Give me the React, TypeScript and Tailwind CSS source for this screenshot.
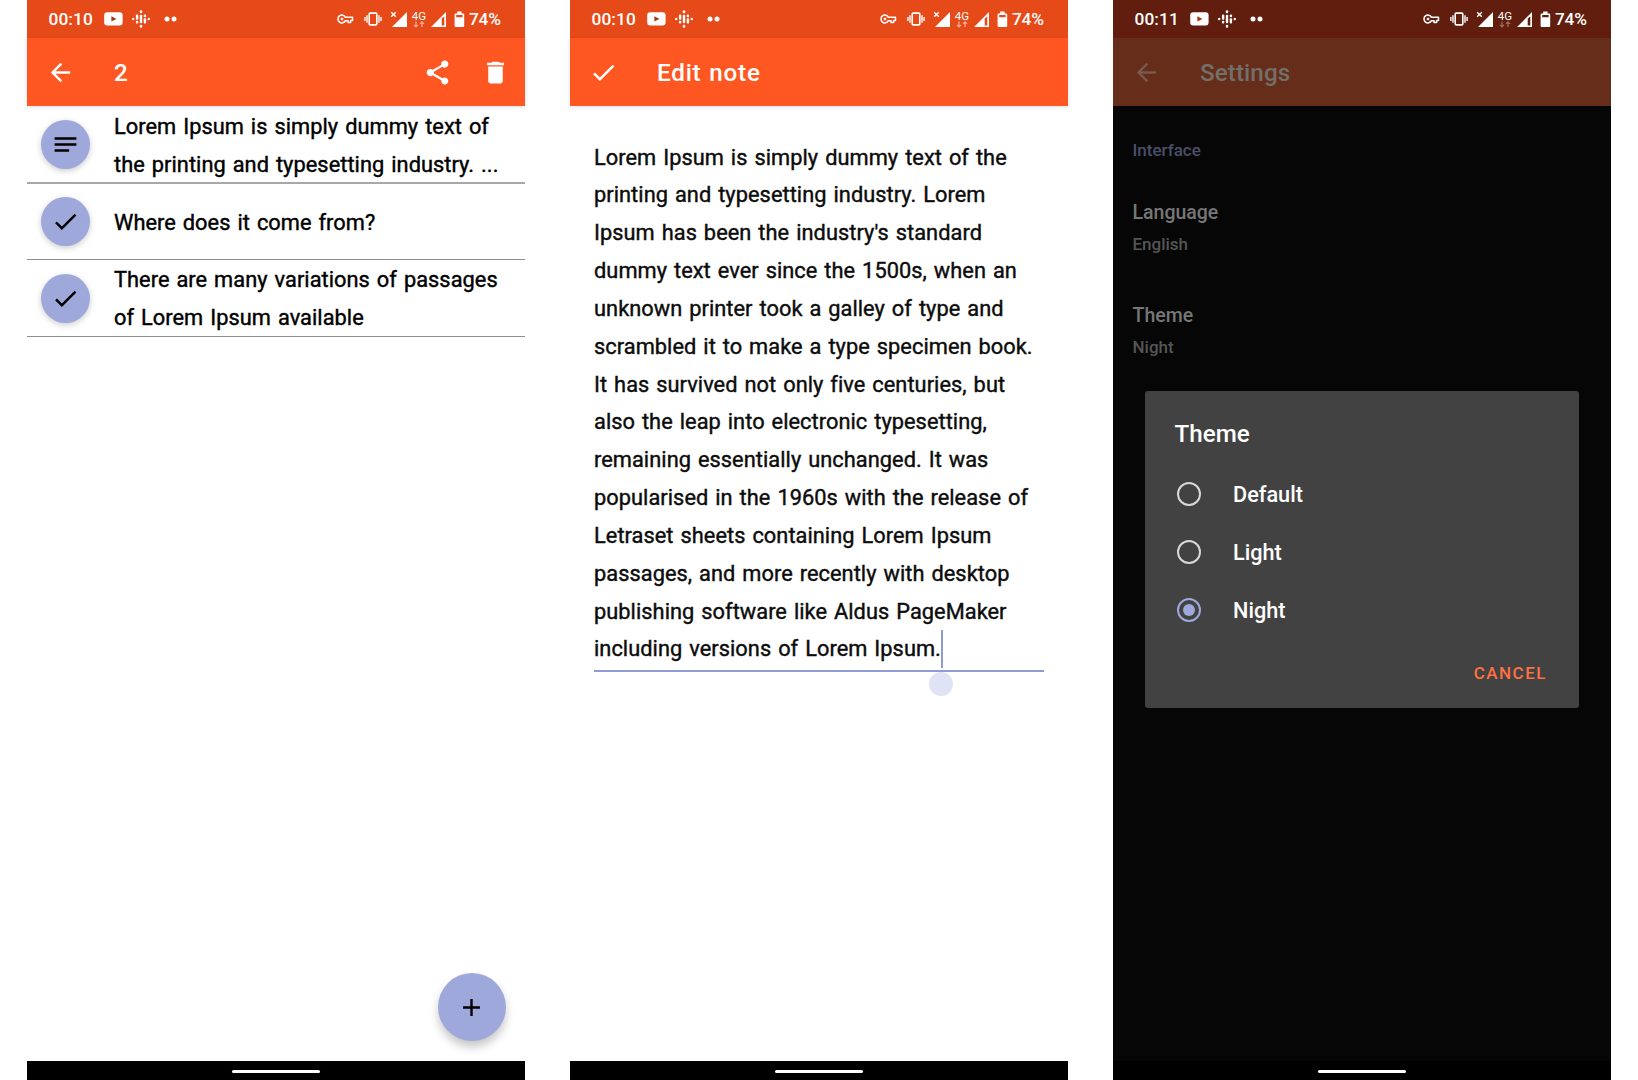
import React from "react";

function Svg({ d, size = 29, className = "" }: { d: string; size?: number; className?: string }) {
  return (
    <svg width={size} height={size} viewBox="0 0 24 24" fill="currentColor" className={"shrink-0 " + className}>
      <path d={d} />
    </svg>
  );
}

const ARROW = "M20 11H7.83l5.59-5.59L12 4l-8 8 8 8 1.41-1.41L7.83 13H20v-2z";
const CHECK = "M9 16.17L4.83 12l-1.42 1.41L9 19 21 7l-1.41-1.41z";
const SHARE =
  "M18 16.08c-.76 0-1.44.3-1.96.77L8.91 12.7c.05-.23.09-.46.09-.7s-.04-.47-.09-.7l7.05-4.11c.54.5 1.25.81 2.04.81 1.66 0 3-1.34 3-3s-1.34-3-3-3-3 1.34-3 3c0 .24.04.47.09.7L8.04 9.81C7.5 9.31 6.79 9 6 9c-1.66 0-3 1.34-3 3s1.34 3 3 3c.79 0 1.5-.31 2.04-.81l7.12 4.16c-.05.21-.08.43-.08.65 0 1.61 1.31 2.92 2.92 2.92 1.61 0 2.92-1.31 2.92-2.92s-1.31-2.92-2.92-2.92z";
const TRASH = "M6 19c0 1.1.9 2 2 2h8c1.1 0 2-.9 2-2V7H6v12zM19 4h-3.5l-1-1h-5l-1 1H5v2h14V4z";
const PLUS = "M19 13h-6v6h-2v-6H5v-2h6V5h2v6h6v2z";
const NOTES = "M3 18h12v-2H3v2zM3 6v2h18V6H3zm0 7h18v-2H3v2z";

function StatusBar({ time, className, arrows }: { time: string; className: string; arrows: string }) {
  return (
    <div className={"flex h-[38px] shrink-0 items-center pl-[21.5px] pr-[24px] text-[17.3px] font-medium text-white " + className}>
      <span className="w-[55.5px] pt-[2px] tracking-[0.1px]">{time}</span>
      <svg width="19" height="14" viewBox="0 0 19 14" className="shrink-0">
        <rect x="0.2" y="0.3" width="18.4" height="13.2" rx="3" fill="white" />
        <path d="M7.4 4.3v5.2l5-2.6z" className="fill-[#a8330f]" />
      </svg>
      <svg width="18" height="18" viewBox="0 0 18 18" className="ml-[9px] shrink-0" fill="white">
        <rect x="0" y="7.7" width="2.4" height="2.6" rx="1.2" />
        <rect x="3.9" y="4.6" width="2.4" height="5.2" rx="1" />
        <rect x="3.9" y="10.8" width="2.4" height="2.6" rx="1" />
        <rect x="7.8" y="0.3" width="2.4" height="2.9" rx="1" />
        <rect x="7.8" y="4.8" width="2.4" height="8.4" rx="1" />
        <rect x="7.8" y="14.8" width="2.4" height="2.9" rx="1" />
        <rect x="11.7" y="4.6" width="2.4" height="2.6" rx="1" />
        <rect x="11.7" y="8.2" width="2.4" height="5.2" rx="1" />
        <rect x="15.6" y="7.7" width="2.4" height="2.6" rx="1.2" />
      </svg>
      <svg width="14" height="6" viewBox="0 0 14 6" className="ml-[14px] shrink-0" fill="white">
        <circle cx="3" cy="3" r="2.5" />
        <circle cx="10" cy="3" r="2.5" />
      </svg>
      <div className="flex-1" />
      <svg width="17" height="10" viewBox="0 0 17 10" className="shrink-0" fill="none" stroke="white" strokeWidth="1.5" strokeLinejoin="round">
        <path d="M8.4 3.3A3.9 3.9 0 1 0 8.4 6.7H11V8.6H13.6V6.4H15.5V3.3Z" />
        <circle cx="5" cy="5" r="1" fill="white" strokeWidth="0.8" />
      </svg>
      <svg width="18" height="16" viewBox="0 0 18 16" className="ml-[10px] shrink-0" fill="none" stroke="white" strokeWidth="1.6">
        <rect x="5.2" y="2.1" width="7.6" height="11.8" rx="1" />
        <path d="M3 4.2v7.6M15 4.2v7.6M.9 6v4M17.1 6v4" strokeWidth="1.4" />
      </svg>
      <svg width="18" height="17" viewBox="0 0 18 17" className="ml-[8px] shrink-0" fill="white">
        <path d="M17 1v15H2z" />
        <path d="M1.2 1.2l4.6 4.6M5.8 1.2L1.2 5.8" stroke="white" strokeWidth="1.4" />
      </svg>
      <div className="ml-[4px] flex w-[14px] shrink-0 flex-col items-center">
        <span className="h-[10px] text-[11.5px] leading-[10px] font-normal">4G</span>
        <svg width="12" height="7" viewBox="0 0 12 7" fill="none" strokeWidth="1.2">
          <path d="M3 .5v5M1 3.8l2 2 2-2" className={arrows} />
          <path d="M9 6V1M7 2.9l2-2 2 2" className={arrows} />
        </svg>
      </div>
      <svg width="17" height="17" viewBox="0 0 17 17" className="ml-[4px] shrink-0" fill="white">
        <path fillRule="evenodd" d="M16 1v15H1zM11.7 7.5v7h2.6v-9z" />
      </svg>
      <svg width="11" height="17" viewBox="0 0 11 17" className="ml-[7px] shrink-0">
        <path fillRule="evenodd" fill="white" d="M3.2.6h4.4v1.8h1.6q1 0 1 1v11.6q0 1-1 1H1.6q-1 0-1-1V3.4q0-1 1-1h1.6zM2.2 4v2.2h6.4V4z" />
      </svg>
      <span className="ml-[4px] w-[32px] pt-[2px] tracking-[-0.2px]">74%</span>
    </div>
  );
}

function NavBar() {
  return (
    <div className="flex h-[19px] shrink-0 items-center justify-center bg-black pt-px">
      <div className="h-[3px] w-[88px] rounded-full bg-white" />
    </div>
  );
}

type AppBarProps = {
  icon: string;
  title: string;
  className: string;
  iconClass?: string;
  titleClass?: string;
  children?: React.ReactNode;
};

function AppBar({ icon, title, className, iconClass = "", titleClass = "", children }: AppBarProps) {
  return (
    <div className={"z-10 flex h-[68px] shrink-0 items-center pl-[19.3px] pr-[15px] " + className}>
      <Svg d={icon} className={iconClass} />
      <span className={"ml-[38.7px] flex-1 pt-[2px] text-[24.2px] font-medium " + titleClass}>{title}</span>
      {children}
    </div>
  );
}

const ROWS = [
  { icon: NOTES, lines: ["Lorem Ipsum is simply dummy text of", "the printing and typesetting industry. ..."], box: "h-[78px] border-b-2 border-[#a8a8a8]", text: "pt-[3px]" },
  { icon: CHECK, lines: ["Where does it come from?"], box: "h-[76px] border-b border-[#8e8e8e]", text: "pt-[2px]" },
  { icon: CHECK, lines: ["There are many variations of passages", "of Lorem Ipsum available"], box: "h-[77px] border-b border-[#8e8e8e]", text: "pt-[2px]" },
];

const NOTE = [
  "Lorem Ipsum is simply dummy text of the",
  "printing and typesetting industry. Lorem",
  "Ipsum has been the industry's standard",
  "dummy text ever since the 1500s, when an",
  "unknown printer took a galley of type and",
  "scrambled it to make a type specimen book.",
  "It has survived not only five centuries, but",
  "also the leap into electronic typesetting,",
  "remaining essentially unchanged. It was",
  "popularised in the 1960s with the release of",
  "Letraset sheets containing Lorem Ipsum",
  "passages, and more recently with desktop",
  "publishing software like Aldus PageMaker",
  "including versions of Lorem Ipsum.",
];

const SETTINGS = [
  { name: "Language", value: "English" },
  { name: "Theme", value: "Night" },
];

const BODY = "text-[21.8px] font-normal tracking-[0.04px] [word-spacing:1.5px] [-webkit-text-stroke:0.4px_currentColor]";

export default function App() {
  return (
    <div className="flex h-[1080px] w-[1638px] gap-[45px] overflow-hidden bg-white pl-[27px] font-['Roboto',sans-serif]">
      <div className="relative flex w-[498px] flex-col">
        <StatusBar time="00:10" className="bg-[#e64a19]" arrows="stroke-[#f5b09a]" />
        <AppBar icon={ARROW} title="2" className="bg-[#ff5722] text-white shadow-[0_1px_4px_rgba(0,0,0,0.12)]">
          <Svg d={SHARE} />
          <Svg d={TRASH} className="ml-[29px]" />
        </AppBar>
        <div className="flex-1">
          {ROWS.map((r) => (
            <div key={r.lines[0]} className={"flex items-center pl-[14px] " + r.box}>
              <div className="flex size-[49px] shrink-0 items-center justify-center rounded-full bg-[#9fa8da] shadow-[0_2px_6px_rgba(0,0,0,0.2)]">
                <Svg d={r.icon} />
              </div>
              <div className={"ml-[24px] leading-[37.8px] text-black " + BODY + " " + r.text}>
                {r.lines.map((l) => (
                  <div key={l} className="whitespace-nowrap">{l}</div>
                ))}
              </div>
            </div>
          ))}
        </div>
        <div className="absolute top-[973px] left-[410.5px] flex size-[68px] items-center justify-center rounded-full bg-[#9fa8da] shadow-[0_6px_10px_rgba(0,0,0,0.22)]">
          <Svg d={PLUS} />
        </div>
        <NavBar />
      </div>

      <div className="flex w-[498px] flex-col">
        <StatusBar time="00:10" className="bg-[#e64a19]" arrows="stroke-[#f5b09a]" />
        <AppBar icon={CHECK} title="Edit note" titleClass="tracking-[0.8px] [word-spacing:1px]" className="bg-[#ff5722] text-white shadow-[0_1px_4px_rgba(0,0,0,0.12)]" />
        <div className="flex-1 px-6 pt-[32px]">
          <div className={"relative h-[534px] border-b-2 border-[#8f9ad6] pt-[0.5px] leading-[37.85px] text-[#0c0c0c] " + BODY}>
            {NOTE.map((l) => (
              <div key={l} className="whitespace-nowrap">{l}</div>
            ))}
            <div className="absolute top-[492px] left-[347px] h-[38px] w-[2px] bg-[#8f9ad6]" />
            <div className="absolute top-[534px] left-[335px] size-[24px] rounded-full bg-[#e0e3f3]" />
          </div>
        </div>
        <NavBar />
      </div>

      <div className="relative flex w-[498px] flex-col bg-[#060606]">
        <StatusBar time="00:11" className="bg-[#611d0d]" arrows="stroke-[#a0705f]" />
        <AppBar icon={ARROW} title="Settings" iconClass="text-[#775a4e]" titleClass="tracking-[0.1px]" className="bg-[#662d1b] text-[#737069]" />
        <div className="flex-1 px-[19.5px] pt-[31px] font-medium">
          <div className="text-[17px] leading-[26px] text-[#4c4e69]">Interface</div>
          {SETTINGS.map((s) => (
            <div key={s.name} className="mb-[45px] mt-[36px] flex h-[58px] flex-col justify-between">
              <div className="text-[19.5px] leading-[28px] text-[#777]">{s.name}</div>
              <div className="text-[17px] leading-[26px] text-[#555]">{s.value}</div>
            </div>
          ))}
        </div>
        <div className="absolute top-[391px] left-[32px] flex h-[317px] w-[434px] flex-col rounded-[3px] bg-[#424242] px-[29.5px] pt-[28px] font-medium text-white">
          <div className="text-[24.2px] leading-[30px]">Theme</div>
          <div className="mt-[16px] flex flex-col">
            {["Default", "Light", "Night"].map((o) => (
              <div key={o} className="flex h-[58px] items-center text-[21.7px]">
                <span className={"ml-[2.5px] flex size-[24px] items-center justify-center rounded-full border-[2.4px] " + (o === "Night" ? "border-[#9fa8da]" : "border-[#d8d8d8]")}>
                  {o === "Night" && <span className="size-[12px] rounded-full bg-[#9fa8da]" />}
                </span>
                <span className="ml-[32px] pt-[2px]">{o}</span>
              </div>
            ))}
          </div>
          <div className="mt-[20px] mr-[2.5px] self-end text-[17px] leading-[28px] tracking-[1.5px] text-[#ff7043]">CANCEL</div>
        </div>
        <NavBar />
      </div>
    </div>
  );
}
